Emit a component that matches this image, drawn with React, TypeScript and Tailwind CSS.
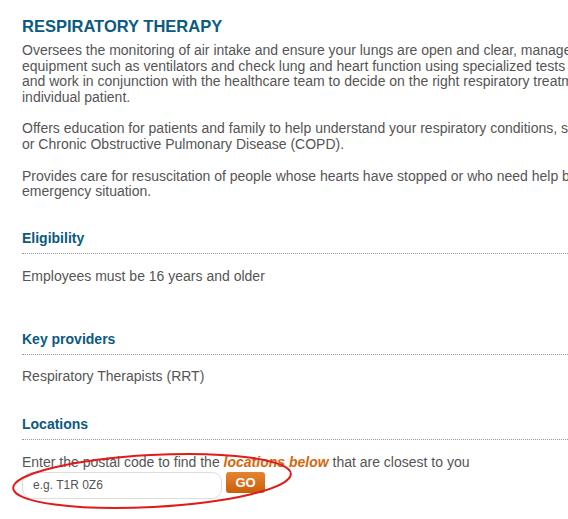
const body = "text-[14px] leading-[15.6px] text-[#555]"
const sectionTitle =
  "border-b border-dotted border-[#999] pb-[6px] text-[14px] font-bold leading-[17px] text-[#0b5a80]"

const App = () => {
  return (
    <div className="relative h-[519px] w-[568px] overflow-hidden bg-white font-['Liberation_Sans',Arial,sans-serif]">
      <div className="w-[700px] pl-[22px] pt-[17px]">
        <h1 className="text-[16.5px] font-bold uppercase leading-[19px] text-[#0b5a80]">Respiratory Therapy</h1>

        <p className={`${body} mt-[7px] whitespace-nowrap`}>
          Oversees the monitoring of air intake and ensure your lungs are open and clear, manage
          <br />
          equipment such as ventilators and check lung and heart function using specialized tests
          <br />
          and work in conjunction with the healthcare team to decide on the right respiratory treatment for each
          <br />
          individual patient.
        </p>
        <p className={`${body} mt-[16px] whitespace-nowrap`}>
          Offers education for patients and family to help understand your respiratory conditions, such as asthma
          <br />
          or Chronic Obstructive Pulmonary Disease (COPD).
        </p>
        <p className={`${body} mt-[16px] whitespace-nowrap`}>
          Provides care for resuscitation of people whose hearts have stopped or who need help breathing in an
          <br />
          emergency situation.
        </p>

        {/* eligibility */}
        <div className="mt-[30px] w-[546px]">
          <h3 className={sectionTitle}>Eligibility</h3>
          <p className={`${body} mt-[15px]`}>Employees must be 16 years and older</p>
        </div>

        <div className="mt-[47px] w-[546px]">
          <h3 className={sectionTitle}>Key providers</h3>
          <p className={`${body} mt-[14px]`}>Respiratory Therapists (RRT)</p>
        </div>

        <div className="mt-[31px] w-[546px]">
          <h3 className={sectionTitle}>Locations</h3>
          <p className={`${body} mt-[15px]`}>
            Enter the postal code to find the{" "}
            <em className="font-bold text-[#d2680c]">locations below</em> that are closest to you
          </p>
          <div className="mt-[1px] flex items-start gap-[4px]">
            <input
              type="text"
              placeholder="e.g. T1R 0Z6"
              className="h-[27px] w-[200px] rounded-[10px] border border-[#ddd] bg-white pl-[10px] text-[12px] text-[#555] outline-none placeholder:text-[#555]"
            />
            <button className="h-[21px] w-[39px] rounded-[3px] bg-gradient-to-b from-[#e5852e] to-[#c85f08] text-[13px] font-bold leading-[21px] text-white">
              GO
            </button>
          </div>
        </div>
      </div>

      {/* red annotation ring */}
      <svg className="pointer-events-none absolute left-0 top-[440px]" width="310" height="79" viewBox="0 0 310 79">
        <ellipse
          cx="152"
          cy="41"
          rx="139"
          ry="26"
          transform="rotate(-3 152 41)"
          fill="none"
          stroke="#e01b1b"
          strokeWidth="2"
        />
      </svg>
    </div>
  )
}

export default App
